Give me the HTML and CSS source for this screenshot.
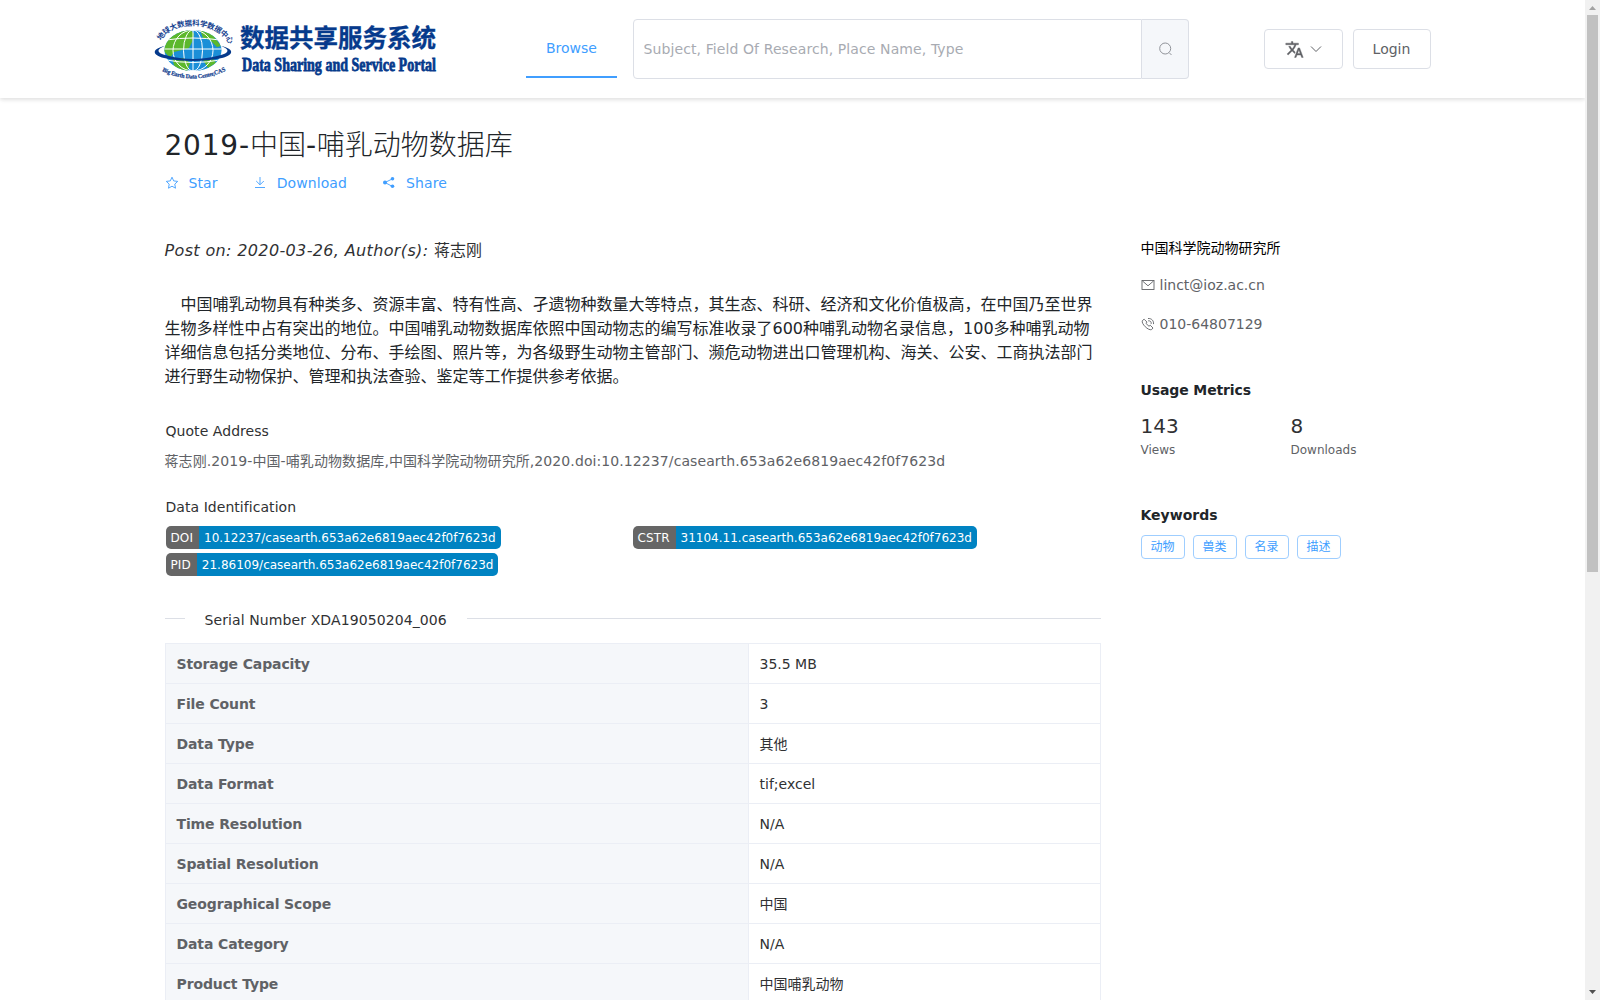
FILE: index.html
```html
<!DOCTYPE html>
<html lang="zh-CN">
<head>
    <meta charset="UTF-8">
    <meta name="viewport" content="width=device-width, initial-scale=1.0">
    <title>2019-中国-哺乳动物数据库</title>
    <link rel="stylesheet" href="styles.css">
</head>
<body>
    <div class="page">
        <header class="header">
            <div class="header-inner">
                <a class="logo" href="#">
                    <svg width="290" height="70" viewBox="150 14 290 70">
                        <defs>
                            <clipPath id="globe"><ellipse cx="193" cy="50.500" rx="28.500" ry="20.500"/></clipPath>
                            <path id="arcTop" d="M161 41 C171 21 213 20 228 42"/>
                            <path id="arcBottom" d="M162 71 Q193 86 225 71"/>
                        </defs>
                        <ellipse cx="193" cy="50.500" rx="28.500" ry="20.500" fill="#1b8fd8"/>
                        <g clip-path="url(#globe)" fill="#5cb82c">
                            <path d="M163 50 L166 38 L176 30 L190 29 L194 34 L192 42 L189 48 L182 50 L174 52 L170 58 Z"/>
                            <path d="M172 58 L184 58 L190 63 L187 72 L176 72 Z"/>
                            <path d="M200 30 L212 34 L221 46 L217 47 L210 40 L203 38 Z"/>
                            <path d="M203 60 L213 58 L216 63 L208 68 Z"/>
                        </g>
                        <g clip-path="url(#globe)" fill="none" stroke="#fff" stroke-width="1">
                            <ellipse cx="193" cy="50.500" rx="20" ry="20.500"/>
                            <ellipse cx="193" cy="50.500" rx="9.500" ry="20.500"/>
                            <path d="M193 30V71M164 49H222M166 40Q193 36 220 40M166 60Q193 65 220 60"/>
                        </g>
                        <path d="M165 46C151 49 152 55 164 58C181 62 205 62 222 58C234 55 235 49 221 46C230 49 230 53 219 55.500C203 60 183 60 167 55.500C156 53 156 49 165 46Z" fill="#063a8c"/>
                        <text class="logo-arc"><textPath href="#arcTop" textLength="80">地球大数据科学数据中心</textPath></text>
                        <text class="logo-arc logo-arc-en"><textPath href="#arcBottom" textLength="66">Big Earth Data Center,CAS</textPath></text>
                        <text class="logo-cn" x="240" y="47" textLength="196">数据共享服务系统</text>
                        <text class="logo-en" x="242" y="70.500" textLength="194" lengthAdjust="spacingAndGlyphs">Data Sharing and Service Portal</text>
                    </svg>
                </a>
                <nav class="menu"><a class="menu-item" href="#">Browse</a></nav>
                <div class="search">
                    <input class="search-input" type="text" placeholder="Subject, Field Of Research, Place Name, Type">
                    <button class="search-btn">
                        <svg width="14" height="14" viewBox="0 0 14 14" fill="none" stroke="currentColor"><circle cx="7.200" cy="6.500" r="5.500"/><path d="M11.200 10.700L13.500 13"/></svg>
                    </button>
                </div>
                <div class="header-actions">
                    <button class="btn">
                        <svg width="19" height="19" viewBox="0 0 24 24" fill="currentColor" stroke="currentColor" stroke-width=".5"><path d="M12.870 15.070l-2.540-2.510.030-.030c1.740-1.940 2.980-4.170 3.710-6.530H17V4h-7V2H8v2H1v1.990h11.170C11.500 7.920 10.440 9.750 9 11.350 8.070 10.320 7.300 9.190 6.690 8h-2c.730 1.630 1.730 3.170 2.980 4.560l-5.090 5.020L4 19l5-5 3.110 3.110.760-2.040zM18.500 10h-2L12 22h2l1.120-3h4.750L21 22h2l-4.500-12zm-2.620 7l1.620-4.330L19.120 17h-3.240z"/></svg>
                        <svg class="arrow" width="12" height="12" viewBox="0 0 12 12" fill="none" stroke="currentColor"><path d="M1 3.500L6 8.500L11 3.500"/></svg>
                    </button>
                    <button class="btn btn-login">Login</button>
                </div>
            </div>
        </header>

        <main class="main">
            <h1 class="title">2019-<span class="thin">中国</span>-<span class="thin">哺乳动物数据库</span></h1>
            <div class="actions">
                <a class="action" href="#">
                    <svg width="14" height="14" viewBox="0 0 14 14" fill="none" stroke="currentColor" stroke-width=".9"><path d="M7 1.200L8.700 4.900L12.700 5.400L9.800 8.100L10.500 12.200L7 10.200L3.500 12.200L4.200 8.100L1.300 5.400L5.300 4.900Z"/></svg>
                    <span>Star</span>
                </a>
                <a class="action" href="#">
                    <svg width="14" height="14" viewBox="0 0 14 14" fill="none" stroke="currentColor" stroke-width=".9"><path d="M7 1V8.500M3.200 5L7 8.800L10.800 5M2 11.500H12"/></svg>
                    <span>Download</span>
                </a>
                <a class="action" href="#">
                    <svg width="14" height="14" viewBox="0 0 14 14" fill="currentColor"><path d="M3 6.500L10.500 2.800M3 6.500L10.500 10.500" stroke="currentColor" stroke-width=".9"/><circle cx="3" cy="6.500" r="2"/><circle cx="10.500" cy="2.800" r="1.800"/><circle cx="10.500" cy="10.300" r="1.800"/></svg>
                    <span>Share</span>
                </a>
            </div>

            <div class="columns">
                <section class="content">
                    <p class="post"><em>Post on: 2020-03-26, Author(s): </em>蒋志刚</p>
                    <p class="desc">中国哺乳动物具有种类多、资源丰富、特有性高、孑遗物种数量大等特点，其生态、科研、经济和文化价值极高，在中国乃至世界<br>生物多样性中占有突出的地位。中国哺乳动物数据库依照中国动物志的编写标准收录了600种哺乳动物名录信息，100多种哺乳动物<br>详细信息包括分类地位、分布、手绘图、照片等，为各级野生动物主管部门、濒危动物进出口管理机构、海关、公安、工商执法部门<br>进行野生动物保护、管理和执法查验、鉴定等工作提供参考依据。</p>

                    <h4 class="label">Quote Address</h4>
                    <p class="quote">蒋志刚.2019-中国-哺乳动物数据库,中国科学院动物研究所,2020.doi:10.12237/casearth.653a62e6819aec42f0f7623d</p>

                    <h4 class="label">Data Identification</h4>
                    <div class="ids">
                        <div class="badge"><span class="badge-key">DOI</span><span class="badge-val">10.12237/casearth.653a62e6819aec42f0f7623d</span></div>
                        <div class="badge"><span class="badge-key">CSTR</span><span class="badge-val">31104.11.casearth.653a62e6819aec42f0f7623d</span></div>
                        <div class="badge"><span class="badge-key">PID</span><span class="badge-val">21.86109/casearth.653a62e6819aec42f0f7623d</span></div>
                    </div>

                    <div class="divider"><span>Serial Number XDA19050204_006</span></div>

                    <table class="info">
                        <tr><th>Storage Capacity</th><td>35.5 MB</td></tr>
                        <tr><th>File Count</th><td>3</td></tr>
                        <tr><th>Data Type</th><td>其他</td></tr>
                        <tr><th>Data Format</th><td>tif;excel</td></tr>
                        <tr><th>Time Resolution</th><td>N/A</td></tr>
                        <tr><th>Spatial Resolution</th><td>N/A</td></tr>
                        <tr><th>Geographical Scope</th><td>中国</td></tr>
                        <tr><th>Data Category</th><td>N/A</td></tr>
                        <tr><th>Product Type</th><td>中国哺乳动物</td></tr>
                    </table>
                </section>

                <aside class="aside">
                    <p class="org">中国科学院动物研究所</p>
                    <p class="contact">
                        <svg width="14" height="14" viewBox="0 0 14 14" fill="none" stroke="currentColor" stroke-width=".9"><rect x="1" y="2.500" width="12" height="9"/><path d="M1.500 3L7 7.800L12.500 3"/></svg>
                        linct@ioz.ac.cn
                    </p>
                    <p class="contact">
                        <svg width="14" height="14" viewBox="0 0 14 14" fill="none" stroke="currentColor" stroke-width=".9"><path d="M3.100 2.200L6 5.100L4.900 6.300L8 9.300L9.200 8.200L12 11L10.600 12.600C7.500 14 -.2 6.500 1.400 3.600ZM7 1.500C10.500 1.200 12.900 3.700 12.500 7.100M7.200 3.800C9.300 3.600 10.500 4.900 10.200 6.900"/></svg>
                        010-64807129
                    </p>
                    <h3 class="aside-title">Usage Metrics</h3>
                    <div class="metrics">
                        <div class="metric"><strong>143</strong><span>Views</span></div>
                        <div class="metric"><strong>8</strong><span>Downloads</span></div>
                    </div>
                    <h3 class="aside-title aside-keywords">Keywords</h3>
                    <div class="tags">
                        <span class="tag">动物</span>
                        <span class="tag">兽类</span>
                        <span class="tag">名录</span>
                        <span class="tag">描述</span>
                    </div>
                </aside>
            </div>
        </main>
    </div>

    <div class="scrollbar">
        <svg width="15" height="15" viewBox="0 0 15 15" fill="#a3a3a3"><path d="M4 10L7.500 6L11 10Z"/></svg>
        <div class="scrollbar-thumb"></div>
        <svg width="15" height="15" viewBox="0 0 15 15" fill="#505050"><path d="M4 5L7.500 9L11 5Z"/></svg>
    </div>
</body>
</html>
```
FILE: styles.css
```css
* {
    box-sizing: border-box;
}

body {
    margin: 0;
    height: 100vh;
    display: flex;
    overflow: hidden;
    font-family: Verdana, "DejaVu Sans", "Noto Sans CJK SC", sans-serif;
    font-size: 14px;
    color: #303133;
    background: #fff;
}

h1, h3, h4, p {
    margin: 0;
}

a {
    text-decoration: none;
}

button, input {
    font: inherit;
}

svg {
    display: block;
    flex: none;
}

.page {
    flex: 1;
    height: 100vh;
    overflow: hidden;
}

/* header */
.header {
    height: 98px;
    box-shadow: 0 2px 4px rgba(0, 0, 0, 0.1), 0 0 6px rgba(0, 0, 0, 0.04);
}

.header-inner {
    display: flex;
    align-items: flex-start;
    width: 1300px;
    margin: 0 auto;
}

.logo {
    margin: 14px 0 0 7px;
    width: 290px;
}

.logo svg {
    overflow: visible;
}

.logo-arc {
    font-family: "Noto Sans CJK SC", sans-serif;
    font-weight: 700;
    font-size: 7.5px;
    fill: #14418f;
}

.logo-arc-en {
    font-family: "Liberation Serif", serif;
    font-size: 6px;
    stroke: #14418f;
    stroke-width: .2px;
}

.logo-cn {
    font-family: "Noto Sans CJK SC", sans-serif;
    font-weight: 700;
    font-size: 24.5px;
    fill: #063a8c;
    stroke: #063a8c;
    stroke-width: .3px;
}

.logo-en {
    font-family: "Liberation Serif", serif;
    font-weight: 700;
    font-size: 19px;
    fill: #063a8c;
    stroke: #063a8c;
    stroke-width: .8px;
}

.menu {
    margin: 18px 0 0 86px;
}

.menu-item {
    display: block;
    width: 91px;
    height: 60px;
    padding-left: 1px;
    line-height: 60px;
    text-align: center;
    color: #409eff;
    border-bottom: 2px solid #409eff;
}

.search {
    display: flex;
    width: 556px;
    height: 60px;
    margin: 19px 0 0 16px;
}

.search-input {
    flex: 1;
    padding: 0 10px;
    letter-spacing: .1px;
    border: 1px solid #dcdfe6;
    border-radius: 4px 0 0 4px;
    outline: none;
}

.search-input::placeholder {
    color: #a8abb2;
}

.search-btn {
    display: flex;
    align-items: center;
    justify-content: center;
    width: 47px;
    padding: 0;
    color: #909399;
    background: #f5f7fa;
    border: 1px solid #dcdfe6;
    border-left: none;
    border-radius: 0 4px 4px 0;
}

.header-actions {
    display: flex;
    gap: 10px;
    margin: 29px 0 0 75px;
}

.btn {
    display: flex;
    align-items: center;
    justify-content: center;
    gap: 6px;
    width: 79px;
    height: 40px;
    padding: 0;
    color: #606266;
    background: #fff;
    border: 1px solid #dcdfe6;
    border-radius: 4px;
}

.btn-login {
    width: 78px;
}

/* main */
.main {
    width: 1300px;
    margin: 0 auto;
    padding: 31px 0 0 22px;
}

.title {
    height: 34px;
    line-height: 34px;
    font-size: 28px;
    font-weight: 400;
    letter-spacing: .8px;
    color: #212529;
}

.thin {
    font-weight: 300;
    letter-spacing: 0;
}

.actions {
    display: flex;
    margin-top: 10px;
    line-height: 20px;
}

.action {
    display: flex;
    align-items: center;
    gap: 10px;
    margin-right: 35px;
    letter-spacing: .1px;
    color: #409eff;
}

.columns {
    display: flex;
    gap: 40px;
    margin-top: 45px;
}

.content {
    width: 936px;
    padding-top: 1px;
}

.post {
    font-size: 16px;
    line-height: 24px;
}

.post em {
    letter-spacing: .36px;
}

.desc {
    margin: 30px 0 32px;
    font-size: 16px;
    line-height: 24px;
    color: #212529;
    text-indent: 16px;
    white-space: nowrap;
}

.label {
    font-weight: 400;
    line-height: 20px;
    padding-left: 1px;
    letter-spacing: .05px;
}

.quote {
    margin: 10px 0 26px;
    line-height: 20px;
    letter-spacing: .09px;
    color: #606266;
}

.ids {
    display: grid;
    grid-template-columns: 467px 1fr;
    gap: 4px 0;
    margin: 9px 0 34px 1px;
    font-size: 12px;
    color: #fff;
}

.badge {
    display: flex;
    height: 23px;
    line-height: 24px;
}

.badge-key {
    padding: 0 6px 0 5px;
    letter-spacing: .1px;
    background: #666;
    border-radius: 5px 0 0 5px;
}

.badge-val {
    padding: 0 5px;
    background: #0083c2;
    border-radius: 0 5px 5px 0;
}

.divider {
    display: flex;
    align-items: center;
    gap: 20px;
    height: 17px;
}

.divider span {
    line-height: 20px;
    padding-top: 2px;
    letter-spacing: .1px;
}

.divider::before,
.divider::after {
    content: "";
    height: 1px;
    width: 20px;
    background: #dcdfe6;
}

.divider::after {
    flex: 1;
}

.info {
    width: 100%;
    margin-top: 16px;
    border-collapse: collapse;
    table-layout: fixed;
}

.info th,
.info td {
    height: 40px;
    padding: 0 11px;
    text-align: left;
    line-height: 20px;
    border: 1px solid #ebeef5;
}

.info th {
    width: 583px;
    letter-spacing: -.12px;
    color: #606266;
    background: #f5f7fa;
}

/* right column */
.aside {
    width: 300px;
}

.org {
    line-height: 20px;
    color: #000;
}

.contact {
    display: flex;
    align-items: center;
    gap: 5px;
    height: 20px;
    margin-top: 17px;
    color: #606266;
}

.contact + .contact {
    margin-top: 19px;
}

.aside-title {
    margin-top: 46px;
    font-size: 14px;
    line-height: 20px;
    letter-spacing: -.12px;
    color: #212529;
}

.aside-keywords {
    margin-top: 47px;
    letter-spacing: 0;
}

.metrics {
    display: flex;
    margin-top: 14px;
}

.metric {
    width: 150px;
}

.metric strong {
    display: block;
    font-size: 20px;
    font-weight: 400;
    line-height: 24px;
}

.metric span {
    display: block;
    margin-top: 4px;
    font-size: 12px;
    line-height: 16px;
    color: #606266;
}

.tags {
    display: flex;
    gap: 8px;
    margin-top: 10px;
}

.tag {
    width: 44px;
    height: 24px;
    line-height: 23px;
    font-size: 12px;
    text-align: center;
    color: #409eff;
    border: 1px solid #9fceff;
    border-radius: 4px;
}

/* scrollbar */
.scrollbar {
    display: flex;
    flex-direction: column;
    width: 15px;
    height: 100vh;
    background: #f1f1f1;
}

.scrollbar-thumb {
    width: 11px;
    height: 557px;
    margin: 0 2px auto;
    background: #c1c1c1;
}
```
